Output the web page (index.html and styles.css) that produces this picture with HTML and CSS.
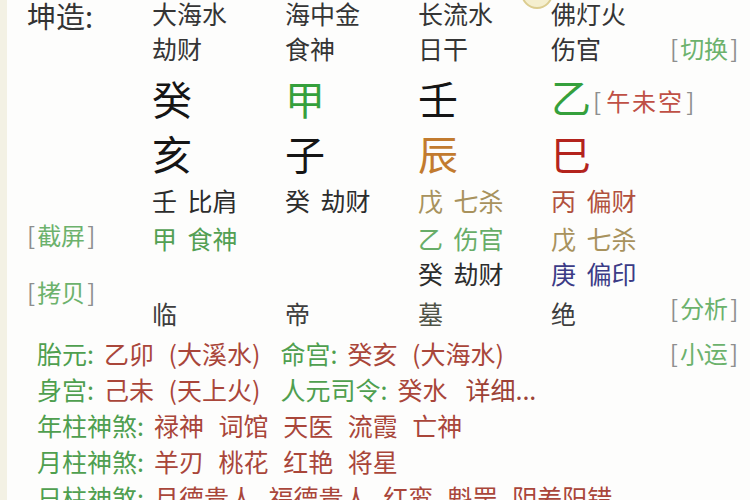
FILE: index.html
```html
<!DOCTYPE html>
<html lang="zh-CN">
<head>
<meta charset="utf-8">
<title>八字排盘</title>
<link rel="stylesheet" href="styles.css">
</head>
<body>
<div class="page">
  <svg class="logo" width="34" height="34" viewBox="0 0 34 34"><circle cx="17" cy="17" r="15" fill="#f5efcf" stroke="#dccd90" stroke-width="2"/></svg>
  <div class="chart">
    <span class="title">坤造:</span>
    <span class="ny">大海水</span><span class="ny">海中金</span><span class="ny">长流水</span><span class="ny">佛灯火</span><span></span>

    <span></span>
    <span class="ss">劫财</span><span class="ss">食神</span><span class="ss">日干</span><span class="ss">伤官</span>
    <span class="btn"><i>[</i>切换<i>]</i></span>

    <span></span>
    <span class="big c-black">癸</span><span class="big c-green">甲</span><span class="big c-black">壬</span>
    <span class="big c-green">乙<span class="kong"><i>[</i>午未空<i>]</i></span></span><span></span>

    <span></span>
    <span class="big c-black">亥</span><span class="big c-black">子</span><span class="big c-orange">辰</span><span class="big c-red">巳</span><span></span>

    <span></span>
    <span class="hs h-dark">壬 比肩</span><span class="hs h-dark">癸 劫财</span><span class="hs h-tan">戊 七杀</span><span class="hs h-red">丙 偏财</span><span></span>

    <span class="btn btn-left btn-cut"><i>[</i>截屏<i>]</i></span>
    <span class="hs h-green">甲 食神</span><span></span><span class="hs h-lgreen">乙 伤官</span><span class="hs h-tan">戊 七杀</span><span></span>

    <span class="btn btn-left btn-copy"><i>[</i>拷贝<i>]</i></span>
    <span></span><span></span><span class="hs h-dark">癸 劫财</span><span class="hs h-navy">庚 偏印</span><span></span>

    <span class="st">临</span><span class="st">帝</span><span class="st st-mu">墓</span><span class="st">绝</span>
    <span class="btn btn-fx"><i>[</i>分析<i>]</i></span>
  </div>

  <div class="info">
    <div class="line">
      <div class="seg"><span class="k">胎元:</span><span class="v">乙卯 (大溪水)</span><span class="k sep">命宫:</span><span class="v">癸亥 (大海水)</span></div>
      <span class="btn"><i>[</i>小运<i>]</i></span>
    </div>
    <div class="line">
      <div class="seg"><span class="k">身宫:</span><span class="v">己未 (天上火)</span><span class="k sep2">人元司令:</span><span class="v">癸水</span><span class="v more">详细...</span></div>
    </div>
    <div class="line"><div class="seg"><span class="k">年柱神煞:</span><span class="v">禄神 词馆 天医 流霞 亡神</span></div></div>
    <div class="line"><div class="seg"><span class="k">月柱神煞:</span><span class="v">羊刃 桃花 红艳 将星</span></div></div>
    <div class="line"><div class="seg"><span class="k">日柱神煞:</span><span class="v">月德贵人 福德贵人 红鸾 魁罡 阴差阳错</span></div></div>
  </div>
</div>
</body>
</html>
```

FILE: styles.css
```css
html, body {
  margin: 0;
  padding: 0;
  background: #fdfdfc;
}
body {
  width: 750px;
  height: 500px;
  overflow: hidden;
  font-family: "Noto Sans CJK SC", "Noto Sans", sans-serif;
  color: #333;
}
.page {
  position: relative;
  height: 500px;
  border-left: 7px solid #f3f1e4;
  box-sizing: border-box;
  overflow: hidden;
}
.logo {
  position: absolute;
  left: 513px;
  top: -24px;
}
.chart {
  display: grid;
  grid-template-columns: 125px 133px 133px 133px 119px 1fr;
  grid-template-rows: 26px 44px 56px 54px 40px 35px 36px 44px;
  padding-left: 20px;
  padding-right: 12px;
}
.chart > span {
  white-space: nowrap;
}
.title {
  font-size: 29px;
  line-height: 30px;
  color: #333;
}
.ny, .ss {
  font-size: 25px;
  color: #353535;
  align-self: center;
  line-height: 28px;
}
.big {
  font-size: 40px;
  line-height: 44px;
  align-self: center;
}
.c-black { color: #151515; }
.c-green { color: #35a03c; }
.c-orange { color: #c27b2f; }
.c-red { color: #b3231c; }
.kong {
  font-size: 24px;
  color: #bf5045;
  margin-left: 2px;
  vertical-align: 2px;
  letter-spacing: 2px;
}
.kong i, .btn i {
  font-style: normal;
  color: #8e8e8e;
}
.kong i:first-child { margin-right: 3px; }
.kong i:last-child { margin-left: 2px; }
.hs, .st {
  font-size: 25px;
  line-height: 30px;
  align-self: center;
  word-spacing: 5px;
}
.h-dark { color: #2c2c2c; }
.h-tan { color: #a8925d; }
.h-red { color: #b1513e; }
.h-green { color: #53a053; }
.h-lgreen { color: #68ad68; }
.h-navy { color: #3b3b86; }
.st { color: #3e3e3e; }
.st-mu { color: #4f5347; }
.btn {
  font-size: 24px;
  line-height: 28px;
  color: #6cb26c;
  align-self: center;
  text-align: right;
}
.btn i:first-child { margin-right: 2px; }
.btn i:last-child { margin-left: 2px; }
.btn-left {
  text-align: left;
}
.btn-cut {
  margin-top: -5px;
}
.btn-copy {
  grid-row: span 2;
  padding-bottom: 6px;
}
.btn-fx {
  align-self: start;
  margin-top: 3px;
}
.info {
  padding-left: 30px;
  padding-right: 12px;
}
.line {
  height: 36px;
  display: flex;
  align-items: center;
  justify-content: space-between;
  font-size: 25px;
  line-height: 30px;
  white-space: nowrap;
}
.seg {
  display: flex;
  align-items: center;
}
.k {
  color: #4f9f4f;
  margin-right: 10px;
}
.v {
  color: #a9463a;
  word-spacing: 9px;
}
.sep { margin-left: 20px; }
.sep2 { margin-left: 20px; }
.more { margin-left: 18px; color: #9c4236; }
```
